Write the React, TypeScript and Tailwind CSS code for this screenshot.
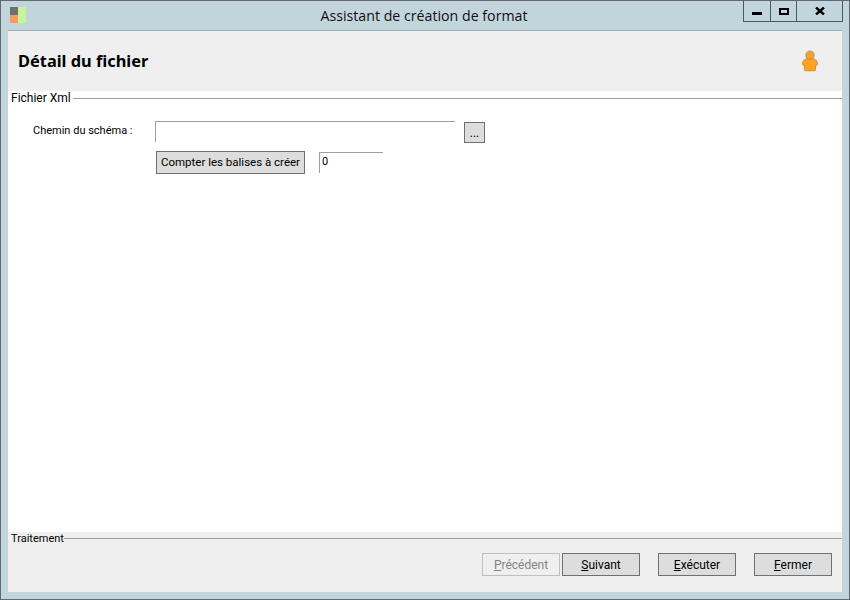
import React from 'react';

function Btn({ u, rest, disabled, w, ml }: { u: string; rest: string; disabled?: boolean; w: string; ml?: string }) {
  return (
    <button
      className={`${w} ${ml ?? ''} h-[23px] text-[12px] leading-none border ${
        disabled ? 'border-[#bfbfbf] bg-[#efefef] text-[#838383]' : 'border-[#707070] bg-[#dddddd] text-black'
      }`}
    >
      <span className="underline">{u}</span>
      {rest}
    </button>
  );
}

function UserIcon() {
  return (
    <svg width="18" height="22" viewBox="0 0 18 22">
      <path
        d="M5 9 C6.5 8 11.5 8 13 9 C15.5 10 16.5 11.5 16.5 14 C16.5 15.2 15.6 15.8 14.5 15.8 L14.5 19.8 C14.5 20.6 14 20.8 13 20.8 L5 20.8 C4 20.8 3.5 20.6 3.5 19.8 L3.5 15.8 C2.4 15.8 1.5 15.2 1.5 14 C1.5 11.5 2.5 10 5 9 Z"
        fill="#fca420"
        stroke="#b98a3e"
        strokeWidth="0.8"
      />
      <circle cx="9" cy="5.2" r="4.2" fill="#f3a232" stroke="#b98a3e" strokeWidth="0.8" />
    </svg>
  );
}

export default function App() {
  return (
    <div className="w-[850px] h-[600px] flex flex-col bg-[#c3d5dc] border border-[#5f6b70] font-['Roboto',sans-serif] text-black overflow-hidden">
      {/* Title bar */}
      <div className="h-[29px] shrink-0 flex items-start">
        <div className="ml-[9px] mt-[6px] w-[16px] h-[16px] grid grid-cols-2 grid-rows-2">
          <div className="bg-[#6f6f6f]" />
          <div className="row-span-2 bg-[#c4f59a]" />
          <div className="bg-[#f79a64]" />
        </div>
        <div className="flex-1 text-center pt-[5px] pl-[79px] text-[14.2px] leading-[20px] font-['Open_Sans',sans-serif] text-[#111]">
          Assistant de création de format
        </div>
        {/* Window controls */}
        <div className="mr-[6px] h-[21px] flex border border-t-0 border-[#4b5a60]">
          <div className="w-[27px] flex items-center justify-center border-r border-[#4b5a60]">
            <div className="w-[10px] h-[3px] bg-black mt-[5px]" />
          </div>
          <div className="w-[26px] flex items-center justify-center border-r border-[#4b5a60]">
            <div className="w-[10px] h-[7px] border-2 border-black" />
          </div>
          <div className="w-[45px] flex items-center justify-center">
            <svg width="10" height="8" viewBox="0 0 10 8">
              <path d="M1 0.5 L9 7.5 M9 0.5 L1 7.5" stroke="#000" strokeWidth="2.4" />
            </svg>
          </div>
        </div>
      </div>

      {/* Client area */}
      <div className="flex-1 mx-[7px] mb-[7px] flex flex-col border-t border-[#9fb0b7] min-h-0">
        {/* Header */}
        <div className="h-[60px] shrink-0 bg-[#efefef] flex items-center justify-between pl-[10px] pr-[23px]">
          <span className="text-[16.4px] font-bold font-['Noto_Sans',sans-serif] leading-none">Détail du fichier</span>
          <UserIcon />
        </div>

        {/* Body */}
        <div className="flex-1 bg-white flex flex-col min-h-0 text-[12px]">
          <div className="flex items-center h-[14px] pl-[3px]">
            <span className="leading-none">Fichier Xml</span>
            <div className="flex-1 h-px bg-[#a0a0a0] ml-[2px]" />
          </div>

          <div className="flex items-start mt-[16px]">
            <label className="w-[147px] pl-[25px] pt-[3px] leading-[14px] text-[11px]">Chemin du schéma :</label>
            <div className="w-[300px] h-[21px] border-t border-l border-[#a0a0a0]" />
            <button className="ml-[9px] mt-px w-[21px] h-[21px] border border-[#707070] bg-[#dddddd] text-[12px] leading-none">
              ...
            </button>
          </div>

          <div className="flex items-start mt-[8px] ml-[148px]">
            <button className="w-[149px] h-[23px] border border-[#707070] bg-[#dddddd] text-[11.5px] leading-none">
              Compter les balises à créer
            </button>
            <div className="ml-[14px] mt-px w-[64px] h-[21px] border-t border-l border-[#a0a0a0] pl-[2px] pt-[2px] leading-[14px] text-[11px]">
              0
            </div>
          </div>
        </div>

        {/* Footer */}
        <div className="h-[60px] shrink-0 bg-[#efefef] flex flex-col text-[12px]">
          <div className="flex items-center h-[13px] pl-[3px]">
            <span className="leading-none text-[11px]">Traitement</span>
            <div className="flex-1 h-px bg-[#a0a0a0]" />
          </div>
          <div className="flex mt-[8px] pl-[474px]">
            <Btn u="P" rest="récédent" disabled w="w-[78px]" />
            <Btn u="S" rest="uivant" w="w-[78px]" ml="ml-[2px]" />
            <Btn u="E" rest="xécuter" w="w-[78px]" ml="ml-[18px]" />
            <Btn u="F" rest="ermer" w="w-[78px]" ml="ml-[18px]" />
          </div>
        </div>
      </div>
    </div>
  );
}
